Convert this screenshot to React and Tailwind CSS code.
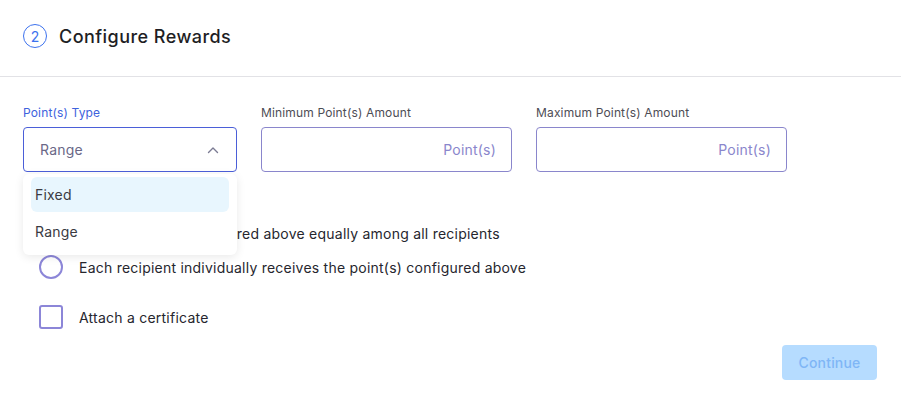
import { useState } from "react";

function Chevron() {
  return (
    <svg width="12" height="8" viewBox="0 0 12 8" fill="none">
      <path d="M1.5 6.5L6 2l4.5 4.5" stroke="#7b7b93" strokeWidth="1.4" strokeLinecap="round" strokeLinejoin="round" />
    </svg>
  );
}

function AmountField({ label }) {
  return (
    <div className="flex flex-col w-[251px]">
      <span className="text-[12px] leading-4 tracking-[0.15px] text-[#4d4d55] mb-[6px]">{label}</span>
      <div className="h-[45px] rounded-[4px] border border-[#8a86cc] flex items-center justify-end pr-[15px]">
        <span className="text-[14px] tracking-[0.2px] text-[#8a86cc]">Point(s)</span>
      </div>
    </div>
  );
}

export default function App() {
  const [type] = useState("Range");
  const options = ["Fixed", "Range"];

  return (
    <div className="w-[901px] h-[406px] bg-white font-['Inter',sans-serif] text-[#26262e]">
      <div className="h-[77px] border-b border-[#e2e2e6] flex items-center px-[23px] pb-[4px] gap-[12px]">
        <div className="w-[24px] h-[24px] rounded-full border border-[#3d72ee] flex items-center justify-center text-[14px] text-[#3d72ee]">
          2
        </div>
        <h2 className="text-[18px] font-medium tracking-[0.45px] text-[#1e1e24]">Configure Rewards</h2>
      </div>

      <div className="px-[23px] pt-[28px]">
        <div className="flex gap-[24px]">
          <div className="flex flex-col w-[214px] relative">
            <span className="text-[12px] leading-4 tracking-[0.15px] text-[#3d62dd] mb-[6px]">Point(s) Type</span>
            <div className="h-[45px] rounded-[4px] border border-[#4b5fd8] flex items-center justify-between pl-[16px] pr-[17px]">
              <span className="text-[14px] tracking-[0.2px] text-[#6a6887]">{type}</span>
              <Chevron />
            </div>
            <div className="absolute left-0 top-[69px] w-[214px] bg-white rounded-[6px] shadow-[0_2px_10px_rgba(0,0,0,0.09)] px-[8px] pt-[3px] pb-[5px] z-10">
              {options.map((o, i) => (
                <div
                  key={o}
                  className={`flex items-center px-[4px] rounded-[6px] text-[14px] tracking-[0.2px] text-[#3a3a42] ${i === 0 ? "h-[35px] bg-[#e8f6fe]" : "h-[38px]"}`}
                >
                  {o}
                </div>
              ))}
            </div>
          </div>
          <AmountField label="Minimum Point(s) Amount" />
          <AmountField label="Maximum Point(s) Amount" />
        </div>

        <div className="flex flex-col pl-[16px] mt-[49px] text-[14px] tracking-[0.23px]">
          <div className="flex items-center gap-[16px] h-[24px]">
            <div className="w-[24px] h-[24px] rounded-full border-2 border-[#8c86d8]" />
            <span>Split the points configured above equally among all recipients</span>
          </div>
          <div className="flex items-center gap-[16px] h-[24px] mt-[10px]">
            <div className="w-[24px] h-[24px] rounded-full border-2 border-[#8c86d8]" />
            <span>Each recipient individually receives the point(s) configured above</span>
          </div>
          <div className="flex items-center gap-[16px] h-[24px] mt-[26px]">
            <div className="w-[24px] h-[24px] rounded-[3px] border-2 border-[#8c86d8]" />
            <span>Attach a certificate</span>
          </div>
        </div>

        <div className="flex justify-end pr-[1px] mt-[16px]">
          <button className="w-[95px] h-[35px] rounded-[4px] bg-[#b6dcff] text-[14px] font-medium tracking-[0.2px] text-[#7fb6f6]">
            Continue
          </button>
        </div>
      </div>
    </div>
  );
}
